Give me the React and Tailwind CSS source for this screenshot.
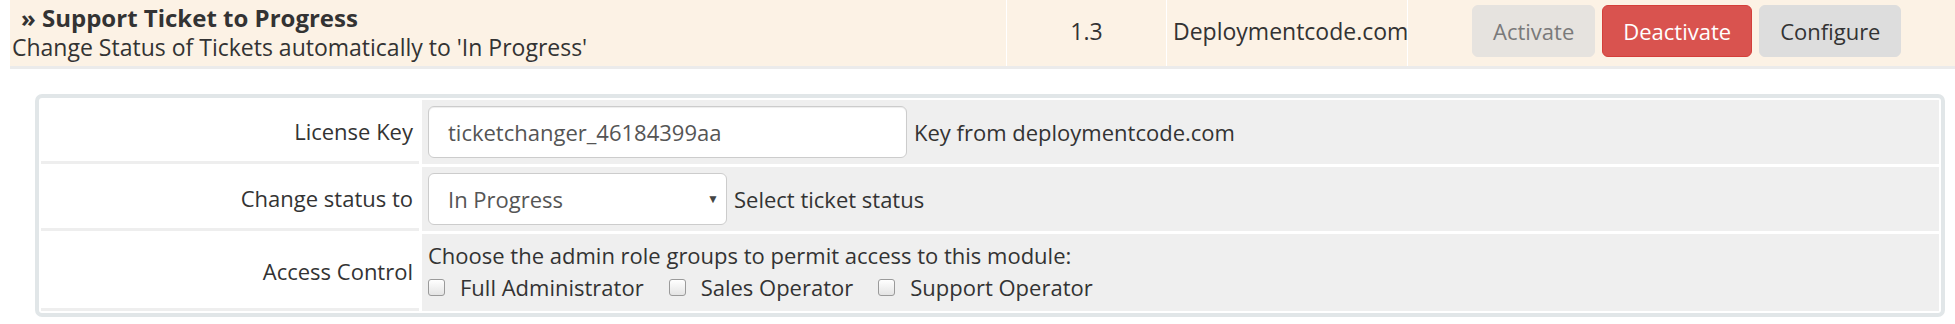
import React from 'react';

const FONT = "font-['Open_Sans',_'Liberation_Sans',_sans-serif]";

const Button = ({ children, variant }) => {
  const styles = {
    disabled: 'bg-[#e6e3df] border-[#e6e3df] text-[#7a7a7a]',
    danger: 'bg-[#d9534f] border-[#d43f3a] text-white',
    default: 'bg-[#dddddd] border-[#dddddd] text-[#333]'
  };
  return (
    <div className={`h-[52px] px-[20px] flex items-center rounded-[6px] border ${styles[variant]}`}>
      {children}
    </div>
  );
};

const Checkbox = ({ label }) => (
  <label className="flex items-center gap-[15px] mr-[25px]">
    <span className="w-[17px] h-[17px] rounded-[3px] border border-[#9a9a9a] bg-gradient-to-b from-white to-[#e4e4e4]" />
    <span>{label}</span>
  </label>
);

// one row of the config form: white label cell + grey field cell
const FormRow = ({ label, children, tall }) => (
  <div className="grid grid-cols-[378px_1fr] gap-x-[3px]">
    <div className="bg-white border-b-[3px] border-[#eeeeee] flex items-center justify-end pr-[6px]">
      {label}
    </div>
    <div className={`bg-[#efefef] px-[6px] ${tall ? 'pt-[7px] pb-[10px]' : 'py-[6px]'} flex items-center`}>
      {children}
    </div>
  </div>
);

const App = () => {
  return (
    <div className={`${FONT} text-[22px] text-[#333] bg-white w-[1955px] h-[324px] overflow-hidden leading-[28px]`}>
      {/* module row */}
      <div className="ml-[10px] flex bg-[#fcf2e5] border-b-[3px] border-[#ebebeb] h-[69px] text-[23px]">
        <div className="w-[997px] border-r border-white flex flex-col justify-center pb-[2px]">
          <div className="font-bold text-[24px] leading-[30px] pl-[11px]">» Support Ticket to Progress</div>
          <div className="pl-[2px]">Change Status of Tickets automatically to 'In Progress'</div>
        </div>
        <div className="w-[160px] border-r border-white flex items-center justify-center pb-[4px]">1.3</div>
        <div className="w-[241px] border-r border-white flex items-center pl-[6px] pb-[4px]">Deploymentcode.com</div>
        <div className="flex-1 flex items-start pt-[5px] pl-[64px] gap-[7px] text-[22px]">
          <Button variant="disabled">Activate</Button>
          <Button variant="danger">Deactivate</Button>
          <Button variant="default">Configure</Button>
        </div>
      </div>

      {/* config panel */}
      <div className="ml-[35px] mt-[25px] w-[1910px] border-[4px] border-[#e1e6e8] rounded-[7px] bg-white p-[2px] flex flex-col gap-[3px]">
        <FormRow label="License Key">
          <div className="w-[479px] h-[52px] border border-[#cccccc] rounded-[6px] bg-white shadow-[inset_0_1px_1px_rgba(0,0,0,0.075)] flex items-center pl-[19px] text-[#555]">
            ticketchanger_46184399aa
          </div>
          <span className="ml-[7px]">Key from deploymentcode.com</span>
        </FormRow>
        <FormRow label="Change status to">
          <div className="w-[299px] h-[52px] border border-[#cccccc] rounded-[6px] bg-white flex items-center justify-between pl-[19px] pr-[7px] text-[#555]">
            <span>In Progress</span>
            <span className="text-[12px] text-[#444]">▼</span>
          </div>
          <span className="ml-[7px]">Select ticket status</span>
        </FormRow>
        <FormRow label="Access Control" tall>
          <div className="flex flex-col">
            <div>Choose the admin role groups to permit access to this module:</div>
            <div className="flex items-center mt-[4px]">
              <Checkbox label="Full Administrator" />
              <Checkbox label="Sales Operator" />
              <Checkbox label="Support Operator" />
            </div>
          </div>
        </FormRow>
      </div>
    </div>
  );
};

export default App;
